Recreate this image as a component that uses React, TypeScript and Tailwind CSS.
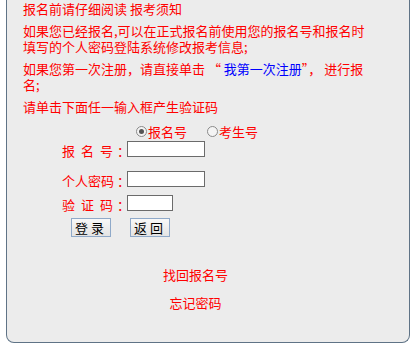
import React from 'react';

const FONT = '"Noto Sans CJK SC", "Microsoft YaHei", sans-serif';

function Radio({ checked, label }: { checked?: boolean; label: string }) {
  return (
    <span className="flex items-center">
      <span className="flex h-[11px] w-[11px] items-center justify-center rounded-full border border-[#8a8a8a] bg-[#f4f4f4]">
        {checked && <span className="h-[5px] w-[5px] rounded-full bg-[#555]" />}
      </span>
      <span className="ml-[1px] text-[13px] leading-none text-[#ff0000]">{label}</span>
    </span>
  );
}

function Field({ label, width, mt }: { label: React.ReactNode; width: string; mt: string }) {
  return (
    <div className={`flex items-center pl-[55px] ${mt}`}>
      <span className="w-[65px] shrink-0 translate-y-[1px] whitespace-nowrap text-[13px] leading-none text-[#ff0000]">
        {label}
      </span>
      <span className={`h-[16px] shrink-0 ${width} border border-[#6b6b6b] bg-white`} />
    </div>
  );
}

export default function App() {
  return (
    <div className="h-[350px] w-[416px] overflow-hidden bg-white" style={{ fontFamily: FONT }}>
      <div className="ml-[6px] h-[343px] w-[404px] rounded-b-[8px] border-x border-b border-[#5f7386] bg-[#ececec]">
        <div className="whitespace-nowrap pl-[16px] pt-[1px] text-[13px] leading-[16px] text-[#ff0000]">
          <p>报名前请仔细阅读 报考须知</p>
          <p className="mt-[6px]">
            如果您已经报名,可以在正式报名前使用您的报名号和报名时
            <br />
            填写的个人密码登陆系统修改报考信息;
          </p>
          <p className="mt-[6px]">
            如果您第一次注册，请直接单击 “ <span className="text-[#0000ff]">我第一次注册</span>”， 进行报
            <br />
            名;
          </p>
          <p className="mt-[6px]">请单击下面任一输入框产生验证码</p>
        </div>

        <div className="mt-[10px] flex gap-[20px] pl-[129px]">
          <Radio checked label="报名号" />
          <Radio label="考生号" />
        </div>

        <Field
          label={
            <>
              <span className="tracking-[6px]">报名</span>号<span className="ml-[4px]">：</span>
            </>
          }
          width="w-[78px]"
          mt="mt-[3px]"
        />
        <Field
          label={
            <>
              个人密码<span className="ml-[3px]">：</span>
            </>
          }
          width="w-[78px]"
          mt="mt-[14px]"
        />
        <Field
          label={
            <>
              <span className="tracking-[6px]">验证</span>码<span className="ml-[4px]">：</span>
            </>
          }
          width="w-[46px]"
          mt="mt-[8px]"
        />

        <div className="mt-[7px] flex gap-[19px] pl-[64px]">
          <button className="h-[19px] w-[40px] border border-[#8fa9c9] bg-gradient-to-b from-[#f8f8f8] to-[#e4e4e4] text-[13px] leading-none tracking-[3px] text-black">
            登录
          </button>
          <button className="h-[19px] w-[40px] border border-[#8fa9c9] bg-gradient-to-b from-[#f8f8f8] to-[#e4e4e4] text-[13px] leading-none tracking-[3px] text-black">
            返回
          </button>
        </div>

        <div className="flex w-[377px] flex-col items-center text-[13px] leading-none text-[#ff0000]">
          <span className="mt-[31px]">找回报名号</span>
          <span className="mt-[15px]">忘记密码</span>
        </div>
      </div>
    </div>
  );
}
